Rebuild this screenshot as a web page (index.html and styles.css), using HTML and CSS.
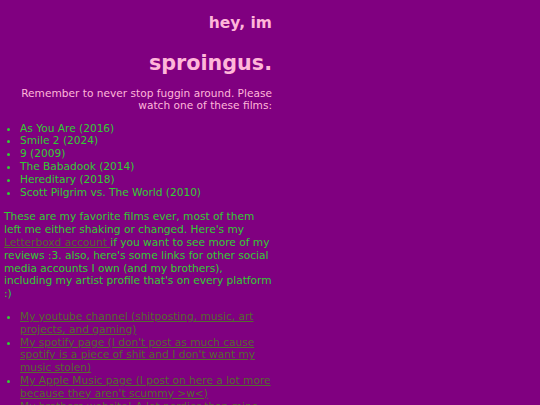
FILE: index.html
```html
<!DOCTYPE html>
<html>
<head>
<meta charset="utf-8">
<link rel="stylesheet" href="styles.css">
</head>
<body>
<div class="page">
  <h2 class="hey">hey, im</h2>
  <h1 class="name">sproingus.</h1>
  <p class="intro">Remember to never stop fuggin around. Please watch one of these films:</p>
  <ul class="list">
    <li>As You Are (2016)</li>
    <li>Smile 2 (2024)</li>
    <li>9 (2009)</li>
    <li>The Babadook (2014)</li>
    <li>Hereditary (2018)</li>
    <li>Scott Pilgrim vs. The World (2010)</li>
  </ul>
  <p class="text">These are my favorite films ever, most of them left me either shaking or changed. Here's my <a href="#">Letterboxd account </a>if you want to see more of my reviews :3. also, here's some links for other social media accounts I own (and my brothers), including my artist profile that's on every platform :)</p>
  <ul class="list">
    <li><a href="#">My youtube channel (shitposting, music, art projects, and gaming)</a></li>
    <li><a href="#">My spotify page (I don't post as much cause spotify is a piece of shit and I don't want my music stolen)</a></li>
    <li><a href="#">My Apple Music page (I post on here a lot more because they aren't scummy &gt;w&lt;)</a></li>
    <li><a href="#">My brothers website! A lot nerdier than mine</a></li>
  </ul>
</div>
</body>
</html>
```
FILE: styles.css
```css
html, body {
  margin: 0;
  padding: 0;
  background: #800080;
}
body {
  font-family: "DejaVu Sans", Verdana, sans-serif;
  font-size: 10.6px;
  line-height: 12.8px;
  color: #33cc33;
}
.page {
  width: 270px;
  padding: 0 4px;
}
.hey {
  font-size: 15.5px;
  line-height: 18px;
  color: #ffb6d9;
  text-align: right;
  margin: 13.6px 0 0;
  padding-right: 2px;
}
.name {
  font-size: 20.7px;
  line-height: 24px;
  color: #ffb6d9;
  text-align: right;
  margin: 19px 0 12px;
  padding-right: 2px;
}
.intro {
  color: #ffb6d9;
  text-align: right;
  margin: 0 0 9.5px;
  padding-right: 2px;
}
.list {
  margin: 0 0 12px;
  padding-left: 16px;
}
.text {
  margin: 0 0 10px;
}
a {
  color: #556b2f;
}
```
